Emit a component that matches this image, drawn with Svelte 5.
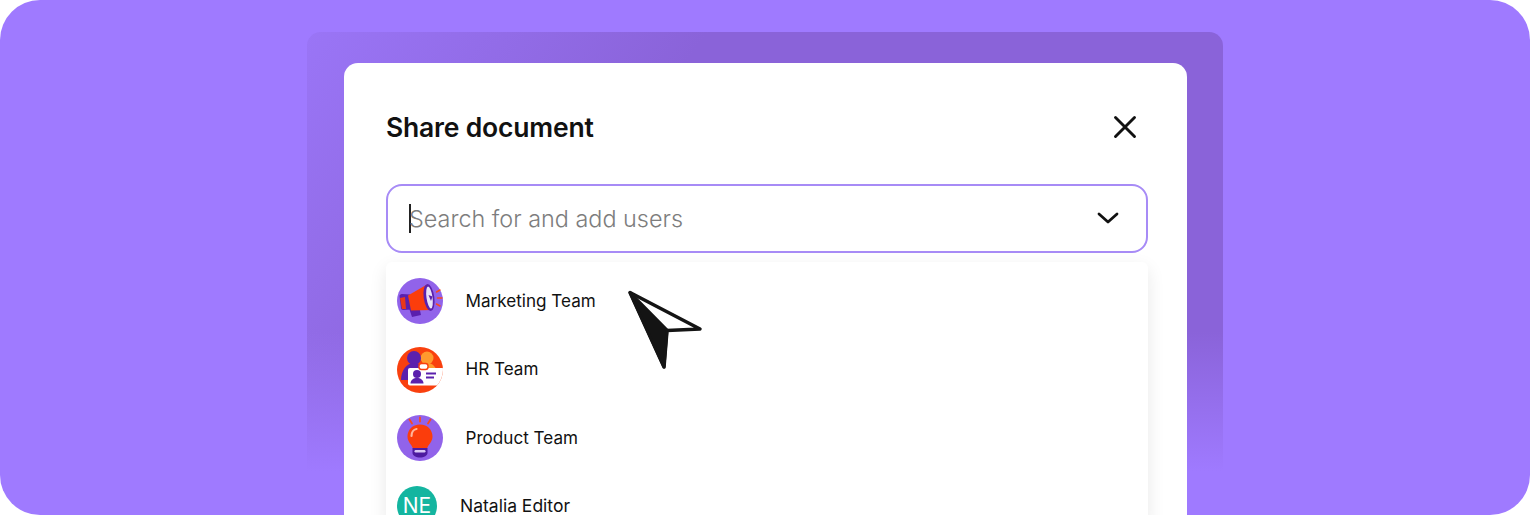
<script>
  const teams = [
    { name: "Marketing Team", icon: "megaphone" },
    { name: "HR Team", icon: "badge" },
    { name: "Product Team", icon: "bulb" }
  ];
</script>

<div class="stage">
  <div class="backdrop">
    <div class="modal">
      <header class="head">
        <h2>Share document</h2>
        <button class="close" aria-label="Close">
          <svg width="24" height="24" viewBox="0 0 24 24" fill="none" stroke="#111" stroke-width="2.9" stroke-linecap="round">
            <path d="M2.500 2.500 21.500 21.500M21.500 2.500 2.500 21.500" />
          </svg>
        </button>
      </header>

      <div class="search">
        <span class="caret"></span>
        <span class="placeholder">Search for and add users</span>
        <svg class="chevron" width="22" height="14" viewBox="0 0 22 14" fill="none" stroke="#111" stroke-width="2.800" stroke-linecap="round" stroke-linejoin="round">
          <path d="M2 3 11 11 20 3" />
        </svg>
      </div>

      <ul class="list">
        {#each teams as team}
          <li class="row">
            <svg class="avatar" width="46" height="46" viewBox="0 0 46 46">
              <defs>
                <clipPath id="disc-{team.icon}"><circle cx="23" cy="23" r="23" /></clipPath>
              </defs>
              {#if team.icon === "megaphone"}
                <circle cx="23" cy="23" r="23" fill="#9163ea" />
                <path d="M12 30 22 28 24 37 15 39Z" fill="#5a20ad" />
                <path d="M2.500 18C2.500 17 3.500 16 5 16L13 16.500 15 31.500 6 32C5 32 4 31 4 30Z" fill="#5a20ad" />
                <path d="M11 17.500 30 6.500 35 32 14 32.500Z" fill="#fb3d0c" />
                <path d="M3 20 8 19 9 31 5 31Z" fill="#e8381a" />
                <ellipse cx="32" cy="19.500" rx="5.300" ry="13.500" transform="rotate(-8 32 19.500)" fill="#5a20ad" />
                <ellipse cx="32.500" cy="19.500" rx="3" ry="11" transform="rotate(-8 32.500 19.500)" fill="#e9e3f8" />
                <path d="M31.500 17 35.500 18.500 34 23Z" fill="#5a20ad" />
                <path d="M39.500 14 43 12M40.500 20 45 20M39.500 26 43 28" stroke="#fb4a1c" stroke-width="1.500" stroke-linecap="round" />
              {:else if team.icon === "badge"}
                <circle cx="23" cy="23" r="23" fill="#f9400e" />
                <g clip-path="url(#disc-badge)">
                  <circle cx="30" cy="11" r="6.500" fill="#ff9a2e" />
                  <path d="M21 26C22 20 26 16 30 16 36 16 40 21 40 26Z" fill="#ff9a2e" />
                  <circle cx="17" cy="11" r="7" fill="#5a20ad" />
                  <path d="M4 33C4 23 10 16 17 16 24 16 28 22 28 33Z" fill="#5a20ad" />
                  <rect x="11" y="21" width="37" height="17.500" rx="2" fill="#fff" />
                </g>
                <rect x="22" y="16.500" width="9" height="6" rx="2.500" fill="#fff" stroke="#f9400e" stroke-width="1.400" />
                <circle cx="20" cy="27" r="4" fill="#5a20ad" />
                <path d="M13.500 36.500C13.500 33 16.500 31 20 31 23.500 31 26.500 33 26.500 36.500Z" fill="#5a20ad" />
                <path d="M29 26.500 39 26.500M29 30.500 37 30.500" stroke="#5a20ad" stroke-width="1.800" />
              {:else}
                <circle cx="23" cy="23" r="23" fill="#9163ea" />
                <path d="M23 9.500C15.500 9.500 10.500 15 10.500 21.500 10.500 27 14.500 29 16 33.500H30C31.500 29 35.500 27 35.500 21.500 35.500 15 30.500 9.500 23 9.500Z" fill="#fb3d0c" />
                <path d="M14.500 21C14.500 17.500 16.500 14.500 19.500 14" stroke="#ffb59c" stroke-width="2.200" fill="none" stroke-linecap="round" />
                <path d="M15.500 33H30.500V38C30.500 40.500 27 42.500 23 42.500 19 42.500 15.500 40.500 15.500 38Z" fill="#4d1ba0" />
                <rect x="17.500" y="35" width="11" height="2.400" rx="1.200" fill="#d8c8f5" />
                <path d="M23 2.500V6.500M12.500 4.500 15 8.500M33.500 4.500 31 8.500" stroke="#fb4a1c" stroke-width="1.800" stroke-linecap="round" />
              {/if}
            </svg>
            <span class="name">{team.name}</span>
          </li>
        {/each}
        <li class="row person">
          <span class="initials">NE</span>
          <span class="name">Natalia Editor</span>
        </li>
      </ul>
    </div>
  </div>

  <svg class="pointer" width="76" height="80" viewBox="0 0 76 80">
    <path d="M3 2.500 73 39 40 40.500 37 77Z" fill="#fff" stroke="#141414" stroke-width="3.500" stroke-linejoin="round" />
    <path d="M3 2.500 40 40 37 77Z" fill="#141414" stroke="#141414" stroke-width="3" stroke-linejoin="round" />
  </svg>
</div>

<style>
  :global(body) {
    background: #fff;
  }

  .stage {
    position: relative;
    height: 515px;
    padding-top: 32px;
    box-sizing: border-box;
    overflow: hidden;
    border-radius: 40px;
    background: #9f7aff;
    font-family: "Inter", "Liberation Sans", sans-serif;
  }

  .backdrop {
    width: 916px;
    height: 483px;
    box-sizing: border-box;
    margin-left: 307px;
    padding: 31px 36px 0 37px;
    border-radius: 14px 14px 0 0;
    background:
      linear-gradient(to bottom, rgba(159, 122, 255, 0) 62%, #9f7aff 91%),
      linear-gradient(125deg, #9a75f6 0%, #8a63d9 32%);
  }

  .modal {
    height: 452px;
    box-sizing: border-box;
    padding: 0 39px 0 42px;
    border-radius: 14px 14px 0 0;
    background: #fff;
  }

  .head {
    display: flex;
    align-items: center;
    justify-content: space-between;
    height: 121px;
    padding: 7px 11px 0 0;
    box-sizing: border-box;
  }

  h2 {
    margin: 0;
    font-size: 26.500px;
    font-weight: 600;
    letter-spacing: -0.2px;
    color: #111;
  }

  .close {
    display: flex;
    padding: 0;
    border: 0;
    background: none;
  }

  .search {
    display: flex;
    align-items: center;
    height: 69px;
    box-sizing: border-box;
    padding: 0 27px 2px 20.500px;
    border: 2.500px solid #a78bf6;
    border-radius: 16px;
  }

  .caret {
    width: 2px;
    height: 29px;
    margin-top: 2px;
    background: #222;
  }

  .placeholder {
    flex: 1;
    font-size: 23.400px;
    font-weight: 300;
    color: #7d7d7d;
    margin: 2px 0 0 -1.500px;
  }

  .list {
    margin: 9px 0 0;
    padding: 4px 0 0;
    list-style: none;
    height: 260px;
    box-shadow: 0 6px 18px rgba(0, 0, 0, 0.09);
    border-radius: 6px;
    background: #fff;
  }

  .row {
    display: flex;
    align-items: center;
    height: 68.500px;
    padding-left: 11px;
    gap: 22.500px;
  }

  .avatar {
    flex: none;
    margin-top: 2px;
  }

  .name {
    font-size: 17.100px;
    color: #111;
  }

  .person {
    gap: 23px;
  }

  .person .name {
    font-size: 17.500px;
  }

  .initials {
    display: flex;
    align-items: center;
    justify-content: center;
    width: 40px;
    height: 40px;
    border-radius: 50%;
    background: #14b5a0;
    color: #fff;
    font-size: 21px;
  }

  .pointer {
    position: absolute;
    left: 627px;
    top: 290px;
  }
</style>
